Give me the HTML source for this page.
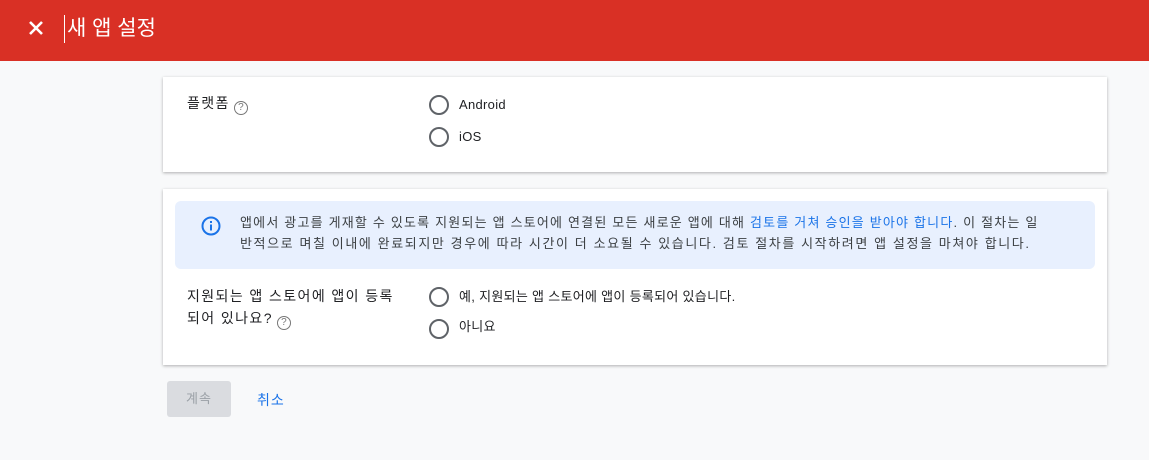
<!DOCTYPE html>
<html><head><meta charset="utf-8"><style>
*{box-sizing:border-box;margin:0;padding:0}
body{width:1149px;height:460px;background:#f8f9fa;font-family:"Liberation Sans","Noto Sans CJK KR",sans-serif;color:#202124;position:relative;overflow:hidden}
.bar{position:absolute;left:0;top:0;width:1149px;height:61px;background:#d93025}
.x{position:absolute;left:28px;top:20px}
.title{position:absolute;left:64px;top:15px;color:#fff;font-size:21px;border-left:1.5px solid #fff;padding-left:2px;line-height:28px}
.card{position:absolute;left:163px;width:944px;background:#fff;box-shadow:0 1px 3px rgba(0,0,0,.3)}
.lbl{position:absolute;font-size:14px;line-height:22px;letter-spacing:1.4px}
.q{display:inline-block;width:14px;height:14px;border:1.3px solid #777;border-radius:50%;font-size:10px;line-height:12px;text-align:center;color:#777;vertical-align:-2px;margin-left:4px;letter-spacing:0}
.r{position:absolute;width:20px;height:20px;border:2px solid #5f6368;border-radius:50%}
.rt{position:absolute;font-size:13px;line-height:18px;letter-spacing:0.3px}
.info{position:absolute;left:12px;top:12px;width:920px;height:68px;background:#e8f0fe;border-radius:6px}
.info p{position:absolute;left:65px;top:11px;width:860px;font-size:13px;line-height:21px;color:#3c4043;letter-spacing:1.2px;white-space:nowrap}
a{color:#1a73e8;text-decoration:none}
.btn{position:absolute;left:167px;top:381px;width:64px;height:36px;background:#dadce0;border-radius:3px;color:#9aa0a6;font-size:13px;text-align:center;line-height:36px;letter-spacing:1px}
.cancel{position:absolute;left:257px;top:390px;color:#1a73e8;font-size:14px;letter-spacing:1px}
</style></head><body>
<div class="bar">
<svg class="x" width="16" height="16" viewBox="0 0 16 16"><path d="M2 2L14 14M14 2L2 14" stroke="#fff" stroke-width="2.6"/></svg>
<div class="title">새 앱 설정</div>
</div>
<div class="card" style="top:77px;height:95px">
<div class="lbl" style="left:24px;top:15px">플랫폼<span class="q">?</span></div>
<div class="r" style="left:266px;top:18px"></div><div class="rt" style="left:296px;top:19px">Android</div>
<div class="r" style="left:266px;top:50px"></div><div class="rt" style="left:296px;top:51px">iOS</div>
</div>
<div class="card" style="top:189px;height:176px">
<div class="info">
<svg style="position:absolute;left:25px;top:14px" width="22" height="22" viewBox="0 0 22 22"><circle cx="11" cy="11" r="8.5" fill="none" stroke="#1a73e8" stroke-width="2"/><rect x="10" y="9.5" width="2" height="6" fill="#1a73e8"/><rect x="10" y="6" width="2" height="2" fill="#1a73e8"/></svg>
<p>앱에서 광고를 게재할 수 있도록 지원되는 앱 스토어에 연결된 모든 새로운 앱에 대해 <a>검토를 거쳐 승인을 받아야 합니다</a>. 이 절차는 일<br><span style="letter-spacing:1.6px">반적으로 며칠 이내에 완료되지만 경우에 따라 시간이 더 소요될 수 있습니다. 검토 절차를 시작하려면 앱 설정을 마쳐야 합니다.</span></p>
</div>
<div class="lbl" style="left:24px;top:96px;width:250px;line-height:22px">지원되는 앱 스토어에 앱이 등록<br>되어 있나요?<span class="q">?</span></div>
<div class="r" style="left:266px;top:98px"></div><div class="rt" style="left:296px;top:99px">예, 지원되는 앱 스토어에 앱이 등록되어 있습니다.</div>
<div class="r" style="left:266px;top:130px"></div><div class="rt" style="left:296px;top:129px">아니요</div>
</div>
<div class="btn">계속</div>
<div class="cancel">취소</div>
</body></html>
